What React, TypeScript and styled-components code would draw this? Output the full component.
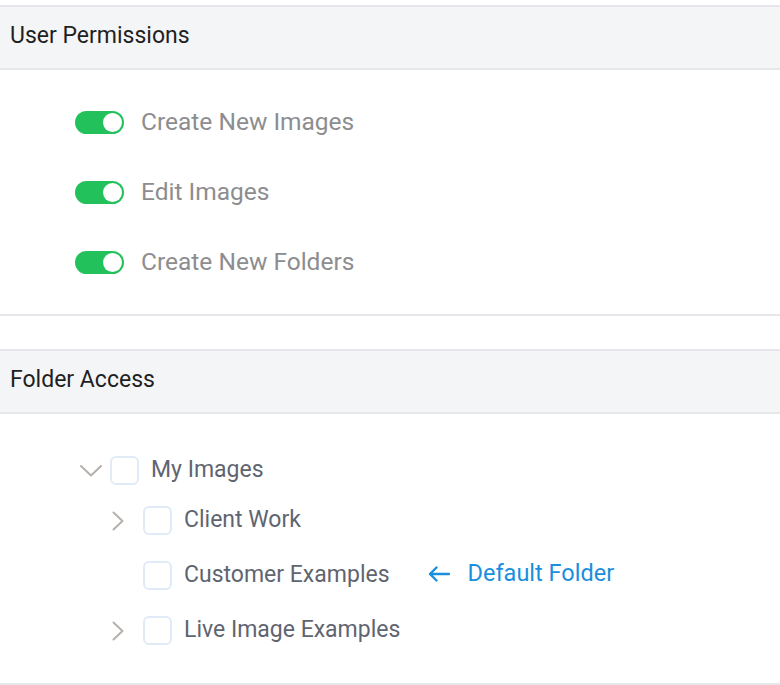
import styled, { createGlobalStyle } from "styled-components";

const GlobalStyle = createGlobalStyle`
  body {
    margin: 0;
    background: #ffffff;
    font-family: Roboto, "Noto Sans", "Liberation Sans", sans-serif;
  }
`;

const permissions = ["Create New Images", "Edit Images", "Create New Folders"];

interface FolderNode {
  name: string;
  expandable?: boolean;
  isDefault?: boolean;
}

const children: FolderNode[] = [
  { name: "Client Work", expandable: true },
  { name: "Customer Examples", isDefault: true },
  { name: "Live Image Examples", expandable: true },
];

function ChevronDown() {
  return (
    <svg width="22" height="12" viewBox="0 0 22 12" fill="none">
      <path d="M1 1l10 9.5L21 1" stroke="#b5b0ab" strokeWidth="2" strokeLinecap="round" strokeLinejoin="round" />
    </svg>
  );
}

function ChevronRight() {
  return (
    <svg width="12" height="20" viewBox="0 0 12 20" fill="none">
      <path d="M1.5 1.5L10.5 10l-9 8.5" stroke="#b5b0ab" strokeWidth="2" strokeLinecap="round" strokeLinejoin="round" />
    </svg>
  );
}

function ArrowLeft() {
  return (
    <svg width="22" height="16" viewBox="0 0 22 16" fill="none">
      <path d="M21 8H2M8.5 1.5L2 8l6.5 6.5" stroke="#1a8fdd" strokeWidth="2.4" strokeLinecap="round" strokeLinejoin="round" />
    </svg>
  );
}

export default function App() {
  return (
    <>
      <GlobalStyle />
      <Page>
        <Section>
          <Header>User Permissions</Header>
          <ToggleList>
            {permissions.map((p) => (
              <ToggleRow key={p}>
                <Toggle $on>
                  <Knob />
                </Toggle>
                <ToggleLabel>{p}</ToggleLabel>
              </ToggleRow>
            ))}
          </ToggleList>
        </Section>

        <Section>
          <Header>Folder Access</Header>
          <Tree>
            <TreeRow>
              <ChevronSlot $pad={2}>
                <ChevronDown />
              </ChevronSlot>
              <Checkbox />
              <FolderName>My Images</FolderName>
            </TreeRow>
            <Nested>
              {children.map((c) => (
                <TreeRow key={c.name}>
                  <ChevronSlot $pad={1}>{c.expandable && <ChevronRight />}</ChevronSlot>
                  <Checkbox />
                  <FolderName>{c.name}</FolderName>
                  {c.isDefault && (
                    <DefaultTag>
                      <ArrowLeft />
                      Default Folder
                    </DefaultTag>
                  )}
                </TreeRow>
              ))}
            </Nested>
          </Tree>
        </Section>
      </Page>
    </>
  );
}

const border = "#e6e7ea";

const Page = styled.div`
  padding-top: 5px;
  display: flex;
  flex-direction: column;
  gap: 33px;
`;

const Section = styled.section`
  border-bottom: 2px solid ${border};
`;

const Header = styled.div`
  height: 65px;
  display: flex;
  align-items: center;
  padding: 0 0 5px 10px;
  box-sizing: border-box;
  background: #f4f5f7;
  border-top: 2px solid ${border};
  border-bottom: 2px solid ${border};
  font-size: 23px;
  color: #1f1f1f;
`;

const ToggleList = styled.div`
  display: flex;
  flex-direction: column;
  gap: 46px;
  padding: 40px 0 40px 75px;
`;

const ToggleRow = styled.div`
  display: flex;
  align-items: center;
  gap: 17px;
  height: 24px;
`;

const Toggle = styled.div<{ $on?: boolean }>`
  width: 49px;
  height: 23px;
  flex-shrink: 0;
  border-radius: 12px;
  background: ${({ $on }) => ($on ? "#22c15c" : "#d1d5db")};
  display: flex;
  align-items: center;
  justify-content: ${({ $on }) => ($on ? "flex-end" : "flex-start")};
  padding: 0 2px;
  box-sizing: border-box;
`;

const Knob = styled.div`
  width: 19px;
  height: 19px;
  border-radius: 50%;
  background: #ffffff;
`;

const ToggleLabel = styled.span`
  font-size: 24.5px;
  line-height: 1;
  color: #8d8d8f;
`;

const Tree = styled.div`
  padding: 42px 0 38px 78px;
`;

const Nested = styled.div`
  display: flex;
  flex-direction: column;
  gap: 26px;
  margin-top: 21px;
  padding-left: 33px;
`;

const TreeRow = styled.div`
  display: flex;
  align-items: center;
  height: 29px;
`;

const ChevronSlot = styled.div<{ $pad: number }>`
  width: 32px;
  display: flex;
  align-items: center;
  padding-left: ${({ $pad }) => $pad}px;
  box-sizing: border-box;
`;

const Checkbox = styled.div`
  width: 29px;
  height: 29px;
  flex-shrink: 0;
  box-sizing: border-box;
  border: 2px solid #e1ebf7;
  border-radius: 6px;
  background: #ffffff;
  margin-right: 12px;
`;

const FolderName = styled.span`
  font-size: 23px;
  line-height: 1;
  padding-bottom: 3px;
  color: #5f6570;
`;

const DefaultTag = styled.span`
  display: flex;
  align-items: center;
  gap: 18px;
  margin-left: 38px;
  padding-bottom: 3px;
  font-size: 23.5px;
  line-height: 1;
  color: #1a8fdd;
`;
